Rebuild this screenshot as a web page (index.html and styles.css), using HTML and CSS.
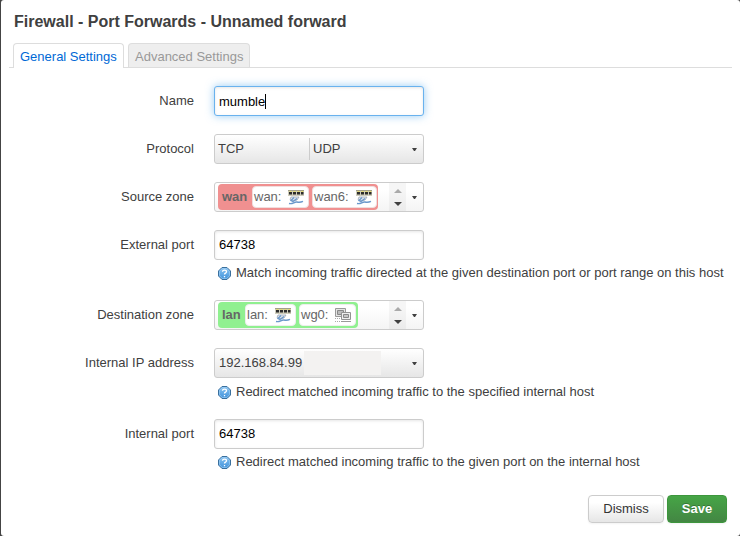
FILE: index.html
```html
<!DOCTYPE html>
<html lang="en">
<head>
<meta charset="utf-8">
<title>Firewall - Port Forwards</title>
<link rel="stylesheet" href="styles.css">
</head>
<body>
<svg width="0" height="0" class="defs">
  <defs>
    <linearGradient id="blue" x1="0" y1="0" x2="0" y2="1"><stop offset="0" stop-color="#8dc6f3"/><stop offset="1" stop-color="#3f91da"/></linearGradient>
    <symbol id="help" viewBox="0 0 13 13">
      <path d="M4 .5h5L12.500 4v5L9 12.500H4L.5 9V4z" fill="url(#blue)" stroke="#3a6f9c"/>
      <path d="M4.300 1.500h4.400l2.800 2.800v4.400l-2.800 2.800H4.300L1.500 8.700V4.300z" fill="none" stroke="#9accf3" stroke-width=".7"/>
      <path d="M4.500 4.800c0-2.200 4-2.200 4 0 0 1.500-2 1.200-2 2.700M6.500 9v1.200" fill="none" stroke="#fff" stroke-width="1.300"/>
    </symbol>
    <symbol id="switch" viewBox="0 0 17 16">
      <path d="M0 1h16v6H0z" fill="#cfcdbb"/>
      <path d="M0 1h16v1H0z" fill="#a3a08a"/>
      <path d="M1 3h3v2.500H1zM5 3h3v2.500H5zM9 3h3v2.500H9zM13 3h2.500v2.500H13z" fill="#2c2c2c"/>
      <path d="M1.500 2h2v1h-2zM5.500 2h2v1h-2zM9.500 2h2v1h-2zM13.300 2h2v1h-2z" fill="#e6db68"/>
      <path d="M3 8h8L9 11l-4 1-3-1.500z" fill="#e4e8ed" stroke="#9aa6b6" stroke-width=".8"/>
      <path d="M6 8.500l-3 3 2 1 4-3M1 14.500c4 1 5-2 8-1.500 2 .5 4 .3 6-.6" fill="none" stroke="#6a98cb" stroke-width="1.400"/>
    </symbol>
    <symbol id="tunnel" viewBox="0 0 17 16">
      <path d="M.5 1.500h10v8H.5z" fill="#e5e5e5" stroke="#999"/>
      <path d="M2.500 3.500h6v4h-6z" fill="#bbb" stroke="#888"/>
      <path d="M6.500 5.500h9v7h-9z" fill="#eee" stroke="#929292"/>
      <path d="M8.500 7.500h5v3h-5z" fill="#c6c6c6" stroke="#888"/>
      <path d="M0 11.500h5M0 14.500h5" stroke="#aaa" stroke-dasharray="1 1"/>
      <path d="M6 14.500h10" stroke="#999"/>
    </symbol>
  </defs>
</svg>
<main class="modal">
  <h4>Firewall - Port Forwards - Unnamed forward</h4>
  <ul class="tabs"><li class="active">General Settings</li><li>Advanced Settings</li></ul>
  <form class="form">
    <div class="row"><label>Name</label><div class="field input focus"><span>mumble</span><i class="caret"></i></div></div>
    <div class="row"><label>Protocol</label><div class="field drop protocol"><span class="tcp">TCP</span><span class="udp">UDP</span><i class="open"></i></div></div>
    <div class="row"><label>Source zone</label><div class="field drop zone-field">
      <div class="zone wan"><b>wan</b><span class="net">wan: <svg><use href="#switch"/></svg></span><span class="net wan6">wan6: <svg><use href="#switch"/></svg></span></div>
      <div class="more"><i></i><i></i></div><i class="open"></i></div></div>
    <div class="row"><label>External port</label><div class="field input">64738</div><p><svg><use href="#help"/></svg><span>Match incoming traffic directed at the given destination port or port range on this host</span></p></div>
    <div class="row"><label>Destination zone</label><div class="field drop zone-field">
      <div class="zone lan"><b>lan</b><span class="net">lan: <svg><use href="#switch"/></svg></span><span class="net wg">wg0: <svg><use href="#tunnel"/></svg></span></div>
      <div class="more"><i></i><i></i></div><i class="open"></i></div></div>
    <div class="row address"><label>Internal IP address</label><div class="field drop ip"><span>192.168.84.99</span><span class="redacted"></span><i class="open"></i></div><p><svg><use href="#help"/></svg><span>Redirect matched incoming traffic to the specified internal host</span></p></div>
    <div class="row last"><label>Internal port</label><div class="field input">64738</div><p><svg><use href="#help"/></svg><span>Redirect matched incoming traffic to the given port on the internal host</span></p></div>
  </form>
  <div class="actions"><button>Dismiss</button><button class="save">Save</button></div>
</main>
</body>
</html>
```
FILE: styles.css
```css
* { box-sizing: border-box; }
body { margin: 0; background: #444; font: 13px/18px "Liberation Sans", Arial, sans-serif; color: #404040; overflow: hidden; }
.defs { display: block; }
.modal { width: 739px; height: 536px; margin-left: 1px; background: #fff; border-radius: 3px; padding: 4px 8px 0 9px; overflow: hidden; }
h4 { margin: 0 0 3px 4px; font-size: 16px; line-height: 36px; white-space: nowrap; }
.tabs { display: flex; height: 25px; margin: 0 0 18px -1px; padding: 0 0 0 4px; list-style: none; border-bottom: 1px solid #ddd; }
.tabs li { height: 24px; width: 122px; margin-right: 4px; border: 1px solid #ddd; border-bottom: 0; border-radius: 4px 4px 0 0; background: #eee; color: #999; line-height: 25px; padding-left: 6px; white-space: nowrap; }
.tabs .active { width: 111px; height: 25px; background: #fff; color: #0069d6; }
.row { display: grid; grid-template-columns: 184px 210px 1fr; column-gap: 20px; margin-bottom: 18px; }
.row label { text-align: right; line-height: 29px; white-space: nowrap; }
.field { width: 210px; height: 30px; border: 1px solid #ccc; border-radius: 3px; display: flex; align-items: center; font-size: 13px; }
.input { padding: 0 4px; color: #000; background: #fff; box-shadow: inset 0 1px 3px rgba(0,0,0,.1); }
.focus { border-color: #69b2ee; box-shadow: inset 0 1px 3px rgba(0,0,0,.1), 0 0 8px rgba(82,168,236,.6); }
.focus span { padding-top: 1px; }
.caret { width: 1px; height: 15px; background: #000; }
.drop { background: linear-gradient(#fff, #e6e6e6); }
.tcp { width: 94px; padding-left: 3px; }
.udp { height: 22px; line-height: 22px; border-left: 1px solid #ccc; padding-left: 3px; }
.open { margin-left: auto; margin-right: 6px; border: 2.5px solid transparent; border-top: 3px solid #404040; border-bottom: 0; width: 5px; height: 3px; }
.zone-field { background: linear-gradient(#fff 25%, #f4f4f4); }
.zone { display: flex; align-items: center; height: 26px; margin-left: 3px; border-radius: 4px; color: #666; }
.wan { width: 160px; background: #f09090; }
.lan { width: 140px; background: #90f090; }
.zone b { width: 34px; padding-left: 4px; color: #666; }
.lan b { width: 27px; }
.net { display: flex; align-items: center; width: 57px; height: 22px; margin-right: 3px; padding: 0 3px 0 1px; background: #fff; border: 1px solid #eee; border-radius: 4px; white-space: nowrap; }
.wan .net { border-color: #f0dede; }
.wan .wan6 { width: 65px; margin: 0; }
.lan .net { width: 51px; margin-right: 3px; }
.lan .wg { width: 57px; margin: 0; }
.net svg { width: 17px; height: 16px; margin-left: auto; }
.more { width: 17px; height: 28px; margin-left: auto; background: rgba(0,0,0,.035); display: flex; flex-direction: column; align-items: center; gap: 9px; padding-top: 6px; }
.more i { border: 4px solid transparent; border-bottom-color: #aaa; border-top: 0; width: 8px; height: 4px; }
.more i + i { border-bottom: 0; border-top: 4px solid #404040; }
.zone-field .open { margin-left: 6px; }
.ip { padding-left: 4px; }
.redacted { width: 77px; height: 24px; margin-left: 2px; background: #f3f2f1; }
.row p { grid-column: 2 / 4; height: 22px; margin: 0; padding: 4px 0 0 4px; display: flex; line-height: 18px; white-space: nowrap; }
.row p svg { width: 13px; height: 13px; margin: 3px 5px 0 0; }
.address { margin-bottom: 19px; }
.address p { padding-top: 5px; }
.last { margin-bottom: 24px; }
.actions { display: flex; justify-content: flex-end; gap: 3px; padding-right: 5px; }
button { width: 76px; height: 28px; border: 1px solid #ccc; border-radius: 4px; padding: 0 0 2px; background: linear-gradient(#fff 25%, #e6e6e6); color: #333; font: 13px "Liberation Sans", Arial, sans-serif; box-shadow: 0 1px 2px rgba(0,0,0,.05); }
.save { width: 60px; color: #fff; font-weight: bold; background: linear-gradient(#46a546, #438643); border-color: #3d963d; text-shadow: 0 -1px 0 rgba(0,0,0,.25); }
```
